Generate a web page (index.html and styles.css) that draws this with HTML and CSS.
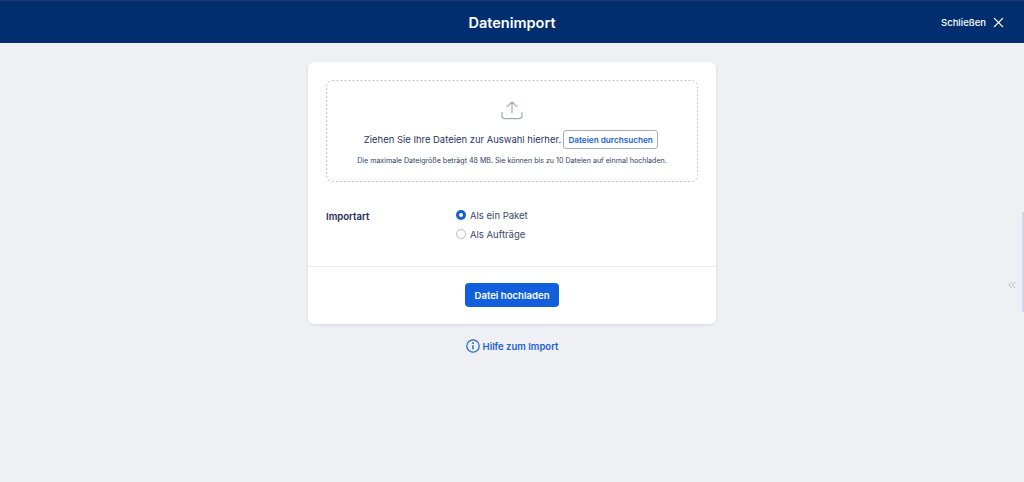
FILE: index.html
```html
<!DOCTYPE html>
<html lang="de">
<head>
<meta charset="utf-8">
<title>Datenimport</title>
<link rel="stylesheet" href="styles.css">
</head>
<body>
<header class="topbar">
  <h1 class="title">Datenimport</h1>
  <button class="close" type="button">Schließen
    <svg class="close-icon" viewBox="0 0 12 12" width="11" height="11"><path d="M1.5 1.5l9 9M10.5 1.5l-9 9" fill="none" stroke="#fff" stroke-width="1.5" stroke-linecap="round"/></svg>
  </button>
</header>
<main class="content">
  <section class="card">
    <div class="card-body">
      <div class="dropzone">
        <svg class="dropzone-outline"><rect x=".5" y=".5" rx="6" ry="6" class="dropzone-rect"/></svg>
        <svg class="upload" viewBox="0 0 24 22" width="24" height="20"><path d="M12 14V2M6.5 7.5L12 2l5.5 5.5M1 13.5v4a3 3 0 0 0 3 3h16a3 3 0 0 0 3-3v-4" fill="none" stroke="#a3aab9" stroke-width="1.3" stroke-linecap="round" stroke-linejoin="round"/></svg>
        <div class="drop-line">
          <span>Ziehen Sie Ihre Dateien zur Auswahl hierher.</span>
          <button class="browse" type="button">Dateien durchsuchen</button>
        </div>
        <p class="hint">Die maximale Dateigröße beträgt 48 MB. Sie können bis zu 10 Dateien auf einmal hochladen.</p>
      </div>
      <div class="import-row">
        <div class="import-label">Importart</div>
        <div class="options">
          <label class="option"><span class="radio radio-on"></span>Als ein Paket</label>
          <label class="option"><span class="radio"></span>Als Aufträge</label>
        </div>
      </div>
    </div>
    <div class="card-foot">
      <button class="primary" type="button">Datei hochladen</button>
    </div>
  </section>
  <a class="help" href="#">
    <svg viewBox="0 0 14 14" width="14" height="14"><circle cx="7" cy="7" r="6.2" fill="none" stroke="#1d62d4" stroke-width="1.2"/><path d="M7 6.2v4" stroke="#1d62d4" stroke-width="1.4"/><circle cx="7" cy="4" r=".9" fill="#1d62d4"/></svg>
    Hilfe zum Import
  </a>
</main>
<div class="side-handle">
  <div class="side-bar"></div>
  <svg class="chevrons" viewBox="0 0 8 8" width="8" height="8"><path d="M3.7 .8L.7 4l3 3.2M7.3 .8L4.3 4l3 3.2" fill="none" stroke="#b4bac6" stroke-width="1"/></svg>
</div>
</body>
</html>
```
FILE: styles.css
```css
* { box-sizing: border-box; }
html, body { height: 100%; }
body {
  margin: 0;
  background: #eef0f4;
  font-family: Inter, "Liberation Sans", sans-serif;
  color: #26345f;
  overflow: hidden;
  position: relative;
}
button { font-family: inherit; cursor: pointer; }
.topbar {
  height: 43px;
  background: #002e6e;
  border-top: 1px solid #1c3a68;
  display: flex;
  align-items: center;
  justify-content: center;
  position: relative;
}
.title {
  margin: 0;
  font-size: 14.5px;
  font-weight: 600;
  color: #fff;
}
.close {
  position: absolute;
  right: 20px;
  top: 16px;
  display: flex;
  align-items: center;
  gap: 7px;
  padding: 0;
  border: 0;
  background: none;
  color: #fff;
  font-size: 9.5px;
  font-weight: 500;
}
.content {
  display: flex;
  flex-direction: column;
  align-items: center;
  padding-top: 19px;
}
.card {
  width: 408px;
  background: #fff;
  border-radius: 6px;
  box-shadow: 0 1px 3px rgba(30, 50, 90, .12);
}
.card-body {
  padding: 18px 18px 0;
  border-bottom: 1px solid #e8eaef;
}
.dropzone {
  height: 102px;
  border-radius: 6px;
  display: flex;
  flex-direction: column;
  align-items: center;
  padding-top: 20px;
  position: relative;
}
.dropzone-outline {
  position: absolute;
  left: 0;
  top: 0;
  width: 100%;
  height: 100%;
}
.dropzone-rect {
  width: calc(100% - 1px);
  height: calc(100% - 1px);
  fill: none;
  stroke: #bcc1cb;
  stroke-width: 1;
  stroke-dasharray: 2 2;
}
.upload { display: block; }
.drop-line {
  display: flex;
  align-items: center;
  gap: 2px;
  margin-top: 10px;
  margin-right: 2px;
  font-size: 9.45px;
}
.browse {
  height: 19px;
  width: 95px;
  padding: 0;
  background: #fff;
  border: 1px solid #a6aec0;
  border-radius: 3px;
  color: #1d62d4;
  font-size: 8.2px;
  font-weight: 600;
  white-space: nowrap;
}
.hint {
  margin: 7px 0 0;
  font-size: 7.1px;
  line-height: 10px;
  color: #2f3c63;
}
.import-row {
  display: flex;
  padding: 26px 0 25px;
}
.import-label {
  width: 130px;
  font-size: 9.6px;
  font-weight: 600;
  line-height: 18px;
  color: #1c2b55;
}
.options {
  display: flex;
  flex-direction: column;
  gap: 5px;
}
.option {
  display: flex;
  align-items: center;
  gap: 4px;
  height: 14px;
  font-size: 9.5px;
  color: #3a4668;
}
.radio {
  width: 10px;
  height: 10px;
  border-radius: 50%;
  background: #fff;
  border: 1px solid #b9bec9;
}
.radio-on { border: 3px solid #155ed8; }
.card-foot {
  height: 57px;
  display: flex;
  justify-content: center;
  padding-top: 16px;
}
.primary {
  width: 94px;
  height: 24px;
  padding: 0;
  border: 0;
  border-radius: 4px;
  background: #115fdc;
  color: #fff;
  font-size: 9.6px;
  font-weight: 600;
}
.help {
  display: flex;
  align-items: center;
  gap: 3px;
  margin-top: 15px;
  height: 14px;
  color: #1d62d4;
  font-size: 9.5px;
  font-weight: 600;
  text-decoration: none;
}
.side-handle { position: absolute; inset: 0; pointer-events: none; }
.side-bar {
  position: absolute;
  right: 0;
  top: 212px;
  width: 2px;
  height: 100px;
  background: #cfd8e8;
}
.chevrons { position: absolute; right: 8px; top: 281px; }
```
